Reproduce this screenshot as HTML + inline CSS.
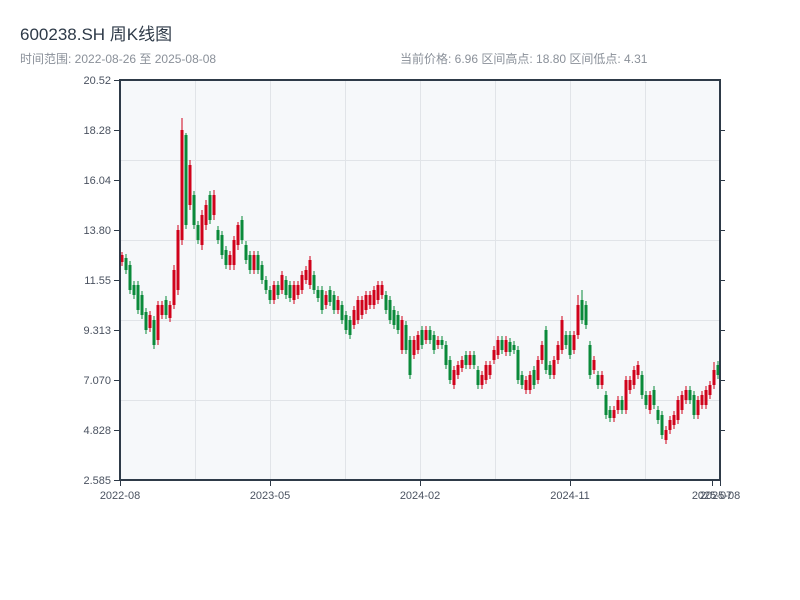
<!DOCTYPE html>
<html><head><meta charset="utf-8"><style>
body{margin:0;width:800px;height:600px;background:#fff;overflow:hidden}
</style></head><body>
<svg width="800" height="600" xmlns="http://www.w3.org/2000/svg" style="position:absolute;left:0;top:0">
<text x="20" y="40" font-size="17" fill="#2e3a48" font-family="Liberation Sans,Noto Sans CJK SC,sans-serif">600238.SH 周K线图</text>
<text x="20" y="63" font-size="12" fill="#8a9099" font-family="Liberation Sans,Noto Sans CJK SC,sans-serif">时间范围: 2022-08-26 至 2025-08-08</text>
<text x="400" y="63" font-size="12" fill="#8a9099" font-family="Liberation Sans,Noto Sans CJK SC,sans-serif">当前价格: 6.96   区间高点: 18.80   区间低点: 4.31</text>
<rect x="120" y="80" width="600" height="400" fill="#f6f8fa"/>
<g stroke="#e1e4e8" stroke-width="1">
<line x1="195.5" y1="80" x2="195.5" y2="480"/><line x1="270.5" y1="80" x2="270.5" y2="480"/><line x1="345.5" y1="80" x2="345.5" y2="480"/><line x1="420.5" y1="80" x2="420.5" y2="480"/><line x1="495.5" y1="80" x2="495.5" y2="480"/><line x1="570.5" y1="80" x2="570.5" y2="480"/><line x1="645.5" y1="80" x2="645.5" y2="480"/>
<line x1="120" y1="160.5" x2="720" y2="160.5"/><line x1="120" y1="240.5" x2="720" y2="240.5"/><line x1="120" y1="320.5" x2="720" y2="320.5"/><line x1="120" y1="400.5" x2="720" y2="400.5"/>
</g>
<path fill="none" stroke="#d0021b" stroke-width="3" d="M122 255V262M150 315V328M158 305V340M162 305V315M170 305V318M174 270V305M178 230V290M182 130V240M190 165V205M202 215V245M206 205V225M214 195V215M230 255V265M234 240V265M238 225V245M254 255V270M274 285V300M282 275V290M294 285V300M298 285V295M302 275V290M306 270V280M310 260V285M326 295V305M338 300V310M354 310V325M358 300V320M362 300V315M366 295V310M370 295V305M374 290V305M378 285V300M382 285V295M402 320V350M414 340V355M418 335V350M426 330V340M438 340V345M454 370V385M458 365V375M462 360V368M470 355V365M482 375V385M486 365V380M490 365V375M494 350V360M498 340V355M506 340V352M526 380V390M530 375V390M538 360V380M542 345V360M554 360V375M558 345V360M562 320V350M574 335V350M578 305V335M594 360V370M602 375V385M614 410V418M618 400V410M626 380V410M630 380V390M634 370V385M638 365V375M650 395V410M666 430V440M670 420V430M674 415V425M678 400V420M682 395V410M686 390V400M698 400V415M702 395V405M706 390V405M710 385V395M714 370V385"/>
<path fill="none" stroke="#d0021b" stroke-width="1" d="M122 252V266M150 311V332M158 301V345M162 301V319M170 301V322M174 265V309M178 225V295M182 118V245M190 160V210M202 210V250M206 200V230M214 190V220M230 251V270M234 236V270M238 222V250M254 251V274M274 281V304M282 271V294M294 281V304M298 281V299M302 271V294M306 266V284M310 256V289M326 291V309M338 296V314M354 306V329M358 296V324M362 296V319M366 291V314M370 291V309M374 286V309M378 281V304M382 281V299M402 316V354M414 336V359M418 331V354M426 326V344M438 336V349M454 366V389M458 361V379M462 356V372M470 351V369M482 371V389M486 361V384M490 361V379M494 346V364M498 336V359M506 336V356M526 376V394M530 371V394M538 356V384M542 341V364M554 356V379M558 341V364M562 316V354M574 331V354M578 295V339M594 356V374M602 371V389M614 406V422M618 396V414M626 376V414M630 376V394M634 366V389M638 361V379M650 391V414M666 426V444M670 416V434M674 411V429M678 396V424M682 391V414M686 386V404M698 396V419M702 391V409M706 386V409M710 381V399M714 362V389"/>
<path fill="none" stroke="#0a8a3a" stroke-width="3" d="M126 258V270M130 265V290M134 285V295M138 285V310M142 295V315M146 312V330M154 320V345M166 300V315M186 135V225M194 195V225M198 225V240M210 195V220M218 230V240M222 235V255M226 250V265M242 220V240M246 245V260M250 255V270M258 255V270M262 265V280M266 280V290M270 290V300M278 285V295M286 280V295M290 285V298M314 275V290M318 290V298M322 290V310M330 290V302M334 295V310M342 305V320M346 315V330M350 320V335M386 295V310M390 300V320M394 310V325M398 315V330M406 325V350M410 340V375M422 330V345M430 330V340M434 335V350M442 340V345M446 345V365M450 360V380M466 355V365M474 355V365M478 370V385M502 340V350M510 342V352M514 345V350M518 350V380M522 375V385M534 370V385M546 330V370M550 365V375M566 335V345M570 335V355M582 300V320M586 305V325M590 345V375M598 375V385M606 395V415M610 410V418M622 400V410M642 375V395M646 395V405M654 390V405M658 410V420M662 415V435M690 390V400M694 395V415M718 365V375"/>
<path fill="none" stroke="#0a8a3a" stroke-width="1" d="M126 254V274M130 261V294M134 281V299M138 281V314M142 291V319M146 308V334M154 316V349M166 296V319M186 133V229M194 191V229M198 221V244M210 191V224M218 226V244M222 231V259M226 246V269M242 216V244M246 241V264M250 251V274M258 251V274M262 261V284M266 276V294M270 286V304M278 281V299M286 276V299M290 281V302M314 271V294M318 286V302M322 286V314M330 286V306M334 291V314M342 301V324M346 311V334M350 316V339M386 291V314M390 296V324M394 306V329M398 311V334M406 321V354M410 336V379M422 326V349M430 326V344M434 331V354M442 336V349M446 341V369M450 356V384M466 351V369M474 351V369M478 366V389M502 336V354M510 338V356M514 341V354M518 346V384M522 371V389M534 366V389M546 326V374M550 361V379M566 331V349M570 331V359M582 290V324M586 301V329M590 341V379M598 371V389M606 391V419M610 406V422M622 396V414M642 371V399M646 391V409M654 386V409M658 406V424M662 411V439M690 386V404M694 391V419M718 361V379"/>
<g stroke="#2e3a48" stroke-width="2" fill="none">
<line x1="120" y1="80" x2="120" y2="481"/><line x1="119" y1="480" x2="721" y2="480"/><line x1="720" y1="80" x2="720" y2="481"/><line x1="119" y1="80" x2="721" y2="80"/>
</g>
<g stroke="#2e3a48" stroke-width="1">
<line x1="114" y1="80.5" x2="120" y2="80.5"/><line x1="114" y1="130.5" x2="120" y2="130.5"/><line x1="114" y1="180.5" x2="120" y2="180.5"/><line x1="114" y1="230.5" x2="120" y2="230.5"/><line x1="114" y1="280.5" x2="120" y2="280.5"/><line x1="114" y1="330.5" x2="120" y2="330.5"/><line x1="114" y1="380.5" x2="120" y2="380.5"/><line x1="114" y1="430.5" x2="120" y2="430.5"/><line x1="114" y1="480.5" x2="120" y2="480.5"/>
<line x1="720" y1="130.5" x2="725" y2="130.5"/><line x1="720" y1="180.5" x2="725" y2="180.5"/><line x1="720" y1="230.5" x2="725" y2="230.5"/><line x1="720" y1="280.5" x2="725" y2="280.5"/><line x1="720" y1="330.5" x2="725" y2="330.5"/><line x1="720" y1="380.5" x2="725" y2="380.5"/><line x1="720" y1="430.5" x2="725" y2="430.5"/>
<line x1="120.5" y1="480" x2="120.5" y2="486"/><line x1="270.5" y1="480" x2="270.5" y2="486"/><line x1="420.5" y1="480" x2="420.5" y2="486"/><line x1="570.5" y1="480" x2="570.5" y2="486"/><line x1="712.5" y1="480" x2="712.5" y2="486"/><line x1="720.5" y1="480" x2="720.5" y2="486"/>
</g>
<g font-size="11" fill="#4a5260" text-anchor="end" font-family="Liberation Sans,sans-serif">
<text x="111" y="84">20.52</text><text x="111" y="134">18.28</text><text x="111" y="184">16.04</text><text x="111" y="234">13.80</text><text x="111" y="284">11.55</text><text x="111" y="334">9.313</text><text x="111" y="384">7.070</text><text x="111" y="434">4.828</text><text x="111" y="484">2.585</text>
</g>
<g font-size="11" fill="#4a5260" text-anchor="middle" font-family="Liberation Sans,sans-serif">
<text x="120" y="499">2022-08</text><text x="270" y="499">2023-05</text><text x="420" y="499">2024-02</text><text x="570" y="499">2024-11</text><text x="712" y="499">2025-07</text><text x="720" y="499">2025-08</text>
</g>
</svg>
</body></html>
